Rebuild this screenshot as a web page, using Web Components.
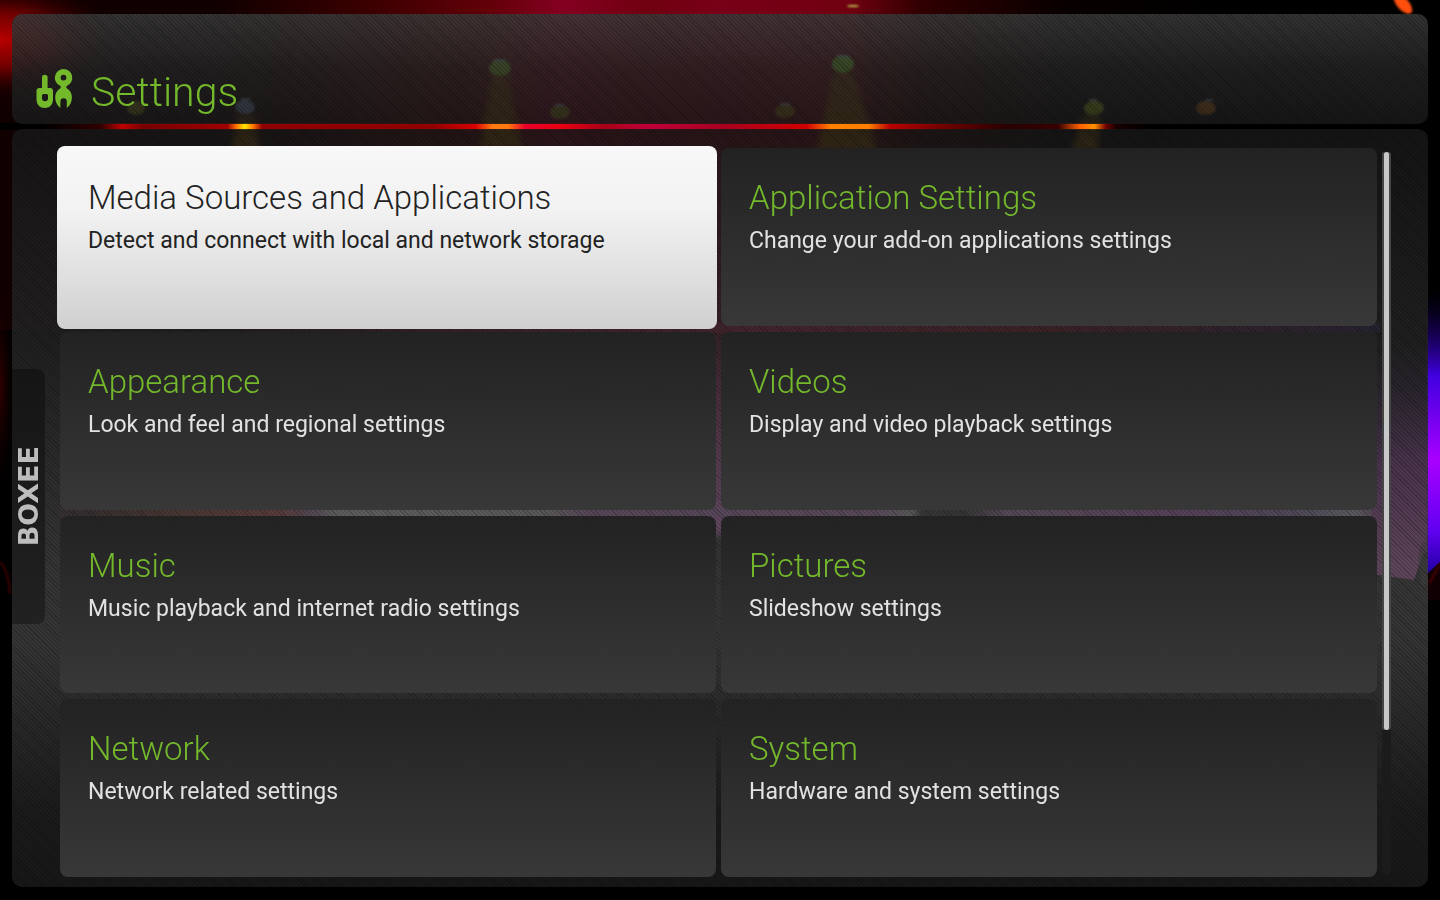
<!DOCTYPE html>
<html lang="en">
<head>
<meta charset="utf-8">
<title>Settings</title>
<style>
  html { background: #000; }
  body { margin: 0; font-family: Roboto, "Liberation Sans", sans-serif; }
</style>
</head>
<body>
<settings-app></settings-app>

<template id="stage-tpl">
  <style>
    :host { display: block; position: absolute; inset: 0; overflow: hidden; z-index: -1; }
    svg { display: block; width: 100%; height: 100%; }
  </style>
  <svg viewBox="0 0 1440 900" preserveAspectRatio="none" aria-hidden="true">
    <defs>
      <linearGradient id="wash" gradientUnits="userSpaceOnUse" x1="0" x2="1440" y1="0" y2="0">
        <stop offset=".15" stop-color="#100000"/><stop offset=".25" stop-color="#380000"/>
        <stop offset=".34" stop-color="#620008"/><stop offset=".39" stop-color="#840020"/>
        <stop offset=".45" stop-color="#700010"/><stop offset=".5" stop-color="#780018"/>
        <stop offset=".59" stop-color="#700010"/><stop offset=".64" stop-color="#300000"/>
        <stop offset=".74" stop-color="#080000"/><stop offset=".85" stop-color="#000"/>
      </linearGradient>
      <linearGradient id="rail" gradientUnits="userSpaceOnUse" x1="0" x2="1440" y1="0" y2="0">
        <stop offset=".03" stop-color="#000"/><stop offset=".07" stop-color="#300000"/>
        <stop offset=".085" stop-color="#c00000"/><stop offset=".1" stop-color="#780000"/>
        <stop offset=".158" stop-color="#a00000"/><stop offset=".164" stop-color="#ff7000"/>
        <stop offset=".17" stop-color="#ffe800"/><stop offset=".176" stop-color="#ff7000"/>
        <stop offset=".182" stop-color="#900000"/><stop offset=".3" stop-color="#900000"/>
        <stop offset=".33" stop-color="#d80000"/><stop offset=".342" stop-color="#ff7810"/>
        <stop offset=".353" stop-color="#ff7810"/><stop offset=".365" stop-color="#e80028"/>
        <stop offset=".39" stop-color="#e80010"/><stop offset=".42" stop-color="#a80018"/>
        <stop offset=".45" stop-color="#c00038"/><stop offset=".5" stop-color="#a80020"/>
        <stop offset=".56" stop-color="#d00000"/><stop offset=".577" stop-color="#ff8000"/>
        <stop offset=".603" stop-color="#ff8000"/><stop offset=".618" stop-color="#b80000"/>
        <stop offset=".66" stop-color="#680000"/><stop offset=".7" stop-color="#280000"/>
        <stop offset=".735" stop-color="#380000"/><stop offset=".75" stop-color="#ff6000"/>
        <stop offset=".76" stop-color="#ff9000"/><stop offset=".768" stop-color="#700000"/>
        <stop offset=".775" stop-color="#180000"/><stop offset=".8" stop-color="#000"/>
      </linearGradient>
      <linearGradient id="cone" x1="0" x2="0" y1="0" y2="1">
        <stop offset="0" stop-color="#a07000" stop-opacity=".5"/><stop offset="1" stop-color="#b07800" stop-opacity=".9"/>
      </linearGradient>
      <linearGradient id="crowd" gradientUnits="userSpaceOnUse" x1="0" x2="1440" y1="0" y2="0">
        <stop offset=".06" stop-color="#200"/><stop offset=".11" stop-color="#702010"/>
        <stop offset=".195" stop-color="#d04040"/><stop offset=".215" stop-color="#b070b0"/>
        <stop offset=".235" stop-color="#e0e8e0"/><stop offset=".38" stop-color="#d0d0d0"/>
        <stop offset=".41" stop-color="#c870d0"/><stop offset=".61" stop-color="#d080d8"/>
        <stop offset=".633" stop-color="#d0d0d0"/><stop offset=".64" stop-color="#222"/>
        <stop offset=".67" stop-color="#222"/><stop offset=".7" stop-color="#c080c8"/>
        <stop offset=".82" stop-color="#c058d0"/><stop offset=".9" stop-color="#a080d0"/>
        <stop offset=".94" stop-color="#d8d0e8"/><stop offset=".96" stop-color="#a05090"/>
      </linearGradient>
      <linearGradient id="haze" x1="0" x2="0" y1="0" y2="1">
        <stop offset="0" stop-color="#b02040" stop-opacity=".6"/><stop offset=".3" stop-color="#c03080"/>
        <stop offset="1" stop-color="#f070e8"/>
      </linearGradient>
      <linearGradient id="beam" x1="0" x2="1" y1="0" y2="0">
        <stop offset="0" stop-color="#801020" stop-opacity="0"/><stop offset=".3" stop-color="#a01838"/>
        <stop offset=".5" stop-color="#c02050"/><stop offset=".72" stop-color="#a01830"/>
        <stop offset="1" stop-color="#301860"/>
      </linearGradient>
      <linearGradient id="side" x1="0" x2="0" y1="0" y2="1">
        <stop offset="0" stop-color="#301060" stop-opacity="0"/><stop offset=".5" stop-color="#982ca8"/>
        <stop offset="1" stop-color="#d050b8"/>
      </linearGradient>
      <linearGradient id="laser" x1="0" x2="0" y1="0" y2="1">
        <stop offset="0" stop-color="#10004a" stop-opacity="0"/><stop offset=".3" stop-color="#4000e0"/>
        <stop offset=".6" stop-color="#a800ff"/><stop offset=".85" stop-color="#6000f0"/>
        <stop offset="1" stop-color="#2000a0"/>
      </linearGradient>
      <radialGradient id="red"><stop offset="0" stop-color="#b80000"/><stop offset=".45" stop-color="#700000"/><stop offset="1" stop-color="#200000" stop-opacity="0"/></radialGradient>
      <radialGradient id="dimred"><stop offset="0" stop-color="#300000"/><stop offset="1" stop-color="#100000" stop-opacity="0"/></radialGradient>
      <filter id="soft" x="-50%" y="-50%" width="200%" height="200%"><feGaussianBlur stdDeviation="3"/></filter>
      <filter id="edge" x="-50%" y="-50%" width="200%" height="200%"><feGaussianBlur stdDeviation="1"/></filter>
    </defs>
    <rect width="1440" height="900" fill="#000"/>
    <rect width="1440" height="330" fill="url(#wash)"/>
    <g fill="url(#cone)" filter="url(#soft)">
      <path d="M492 72h16l14 76h-42z"/><path d="M833 70h20l24 80h-60z"/>
      <path d="M239 112h14l7 38h-28z"/><path d="M1084 112h16l-2 38h-26z"/>
    </g>
    <rect y="123" width="1440" height="7" fill="url(#rail)"/>
    <ellipse cx="0" cy="40" rx="120" ry="60" fill="url(#red)"/>
    <ellipse cx="0" cy="385" rx="14" ry="110" fill="url(#dimred)"/>
    <path d="M0 562 Q9 572 10 594" fill="none" stroke="#400006" stroke-width="2" filter="url(#edge)"/>
    <g filter="url(#edge)">
      <ellipse cx="500" cy="68" rx="11" ry="8" fill="#90d028"/><ellipse cx="843" cy="64" rx="11" ry="9" fill="#98e828"/>
      <ellipse cx="560" cy="112" rx="10" ry="7" fill="#a09020"/><ellipse cx="785" cy="111" rx="10" ry="7" fill="#b08018"/>
      <ellipse cx="1094" cy="108" rx="10" ry="7" fill="#a8d018"/><ellipse cx="1206" cy="108" rx="10" ry="7" fill="#d07818"/>
      <ellipse cx="245" cy="107" rx="10" ry="7" fill="#88a8d8"/><ellipse cx="136" cy="108" rx="9" ry="7" fill="#a09020"/>
      <path d="M494 60h12M837 56h12M555 105h9M781 104h9M1089 100h8M1206 100h7M241 99h9" stroke="#b0c0c8" stroke-width="2"/>
      <ellipse cx="853" cy="6" rx="6" ry="1" fill="#c0c050"/>
      <ellipse cx="1403" cy="4" rx="12" ry="6" fill="#ff5010" transform="rotate(48 1403 4)"/>
    </g>
    <rect x="580" y="325" width="300" height="210" fill="url(#haze)" filter="url(#soft)"/>
    <rect x="712" y="140" width="14" height="190" fill="#801030" opacity=".7"/>
    <rect x="180" y="323" width="1200" height="10" fill="url(#beam)"/>
    <rect x="60" y="507" width="1320" height="10" fill="url(#crowd)"/>
    <path d="M1372 340h56v210l-6 6-8 24-42-6z" fill="url(#side)"/>
    <path d="M1418 556l4-14 10 0-2 44-8-2z" fill="#333" opacity=".6"/>
    <rect x="1427" y="290" width="13" height="284" fill="url(#laser)"/>
    <path d="M1427 600l0-26 13-12v38z" fill="#100003"/>
    <path d="M1429 584l11-20" stroke="#500008" stroke-width="2" filter="url(#edge)"/>
  </svg>
</template>

<template id="header-tpl">
  <style>
    :host {
      display: flex; align-items: flex-start; gap: 17px; height: 110px; box-sizing: border-box;
      padding: 54px 24px 8px; border-radius: 10px; color: #74b82c;
      background:
        repeating-linear-gradient(45deg, rgba(0,0,0,.2) 0 1px, transparent 1px 3px),
        linear-gradient(rgba(58,58,58,.86), rgba(36,36,36,.84) 50%, rgba(26,26,26,.84));
    }
    svg { width: 38px; height: 42px; flex: none; }
    h1 { margin: 0; font-size: 41px; line-height: 48px; font-weight: 300; }
  </style>
  <svg viewBox="36 68 38 42" fill="#74b82c" aria-hidden="true">
    <path fill-rule="evenodd" d="M42 77.5a2.8 2.8 0 0 1 5.6 0V88h2.4q3 0 3 3v8.500c0 5-3.500 8.500-8.200 8.500s-8.300-3.500-8.300-8.500V91q0-3 3-3H42zM43.500 94q-1.500 0-1.500 1.500v2.800a3 3 0 0 0 6 0v-2.800q0-1.500-1.500-1.500z"/>
    <path fill-rule="evenodd" d="M63.500 69a8.700 8.700 0 0 1 3.900 16.500c-1.600.8-1.500 2.400 0 3.300 2.800 1.800 4.500 4.700 4.500 8.400 0 4.500-1.600 8-5.100 10.700V101.500a3.200 3.200 0 0 0-6.400 0v6.400c-3.500-2.700-5.200-6.200-5.200-10.700 0-3.700 1.700-6.600 4.500-8.400 1.500-.9 1.600-2.500 0-3.300A8.700 8.700 0 0 1 63.500 69zm0 5.700a2.900 2.900 0 1 0 0 5.800 2.900 2.900 0 0 0 0-5.800z"/>
  </svg>
  <h1><slot></slot></h1>
</template>

<template id="tab-tpl">
  <style>
    :host { display: block; }
    button {
      display: flex; align-items: center; justify-content: center; width: 33px; height: 255px;
      padding: 0; border: 0; border-radius: 0 8px 8px 0; color: #bdbdbd;
      background: linear-gradient(#151515, #212121);
      font: bold 27px/33px "DejaVu Sans", sans-serif; cursor: pointer;
    }
    span { writing-mode: vertical-rl; transform: rotate(180deg); }
  </style>
  <button type="button"><span><slot></slot></span></button>
</template>

<template id="card-tpl">
  <style>
    :host { display: block; position: relative; min-height: 120px; }
    a {
      display: block; height: 100%; box-sizing: border-box; padding: 30px 28px 20px;
      border-radius: 8px; color: inherit; text-decoration: none;
      background: linear-gradient(rgba(34,34,34,.98), rgba(56,56,56,.99));
    }
    h2 { position: relative; margin: 0 0 9px; font-size: 33px; line-height: 40px; font-weight: 300; color: #74b82c; }
    p { position: relative; margin: 0; font-size: 23px; line-height: 28px; color: #e2e2e2; }
    :host([selected]) { z-index: 1; }
    :host([selected]) a::before {
      content: ""; position: absolute; inset: -2px -1px -3px -3px; border-radius: 8px;
      background: linear-gradient(#f8f8f8, #f2f2f2 35%, #d0d0d0);
    }
    :host([selected]) h2, :host([selected]) p { color: #222; }
  </style>
  <a href="#"><h2><slot name="title"></slot></h2><p><slot></slot></p></a>
</template>

<template id="scroll-tpl">
  <style>
    :host { display: block; box-sizing: border-box; padding: 1px 2px; border-radius: 5px; background: #1b1b1b; }
    div { height: 80%; box-sizing: border-box; border-radius: 3px; background: #c8c8c8; box-shadow: -2px 0 #444, 2px 0 #444; }
  </style>
  <div></div>
</template>

<template id="app-tpl">
  <style>
    :host {
      display: flex; flex-direction: column; gap: 5px; position: relative; z-index: 0;
      min-height: 100vh; box-sizing: border-box; padding: 14px 12px 13px;
    }
    main {
      flex: 1; display: flex; border-radius: 10px; overflow: hidden; padding-right: 37px;
      background:
        repeating-linear-gradient(45deg, rgba(0,0,0,.22) 0 1px, transparent 1px 3px),
        linear-gradient(rgba(24,24,24,.84), rgba(38,38,38,.82) 28%, rgba(66,66,66,.8) 58%, rgba(62,62,62,.84) 68%, rgba(32,32,32,.84) 90%, rgba(28,28,28,.84));
    }
    side-tab { margin: 240px 15px 0 0; }
    section {
      flex: 1; display: grid; grid-template-columns: 1fr 1fr; grid-auto-rows: 1fr; gap: 6px 5px;
      padding: 19px 0 10px;
    }
    scroll-track { width: 9px; margin: 22px 0 12px 5px; }
  </style>
  <stage-backdrop></stage-backdrop>
  <page-header>Settings</page-header>
  <main>
    <side-tab>BOXEE</side-tab>
    <section>
      <setting-card selected><span slot="title">Media Sources and Applications</span>Detect and connect with local and network storage</setting-card>
      <setting-card><span slot="title">Application Settings</span>Change your add-on applications settings</setting-card>
      <setting-card><span slot="title">Appearance</span>Look and feel and regional settings</setting-card>
      <setting-card><span slot="title">Videos</span>Display and video playback settings</setting-card>
      <setting-card><span slot="title">Music</span>Music playback and internet radio settings</setting-card>
      <setting-card><span slot="title">Pictures</span>Slideshow settings</setting-card>
      <setting-card><span slot="title">Network</span>Network related settings</setting-card>
      <setting-card><span slot="title">System</span>Hardware and system settings</setting-card>
    </section>
    <scroll-track></scroll-track>
  </main>
</template>

<script>
  class TemplateElement extends HTMLElement {
    constructor() {
      super();
      const tpl = document.getElementById(this.constructor.template);
      this.attachShadow({ mode: 'open' }).append(tpl.content.cloneNode(true));
    }
  }
  customElements.define('stage-backdrop', class extends TemplateElement { static template = 'stage-tpl'; });
  customElements.define('page-header', class extends TemplateElement { static template = 'header-tpl'; });
  customElements.define('side-tab', class extends TemplateElement { static template = 'tab-tpl'; });
  customElements.define('setting-card', class extends TemplateElement { static template = 'card-tpl'; });
  customElements.define('scroll-track', class extends TemplateElement { static template = 'scroll-tpl'; });
  customElements.define('settings-app', class extends TemplateElement { static template = 'app-tpl'; });
</script>
</body>
</html>
